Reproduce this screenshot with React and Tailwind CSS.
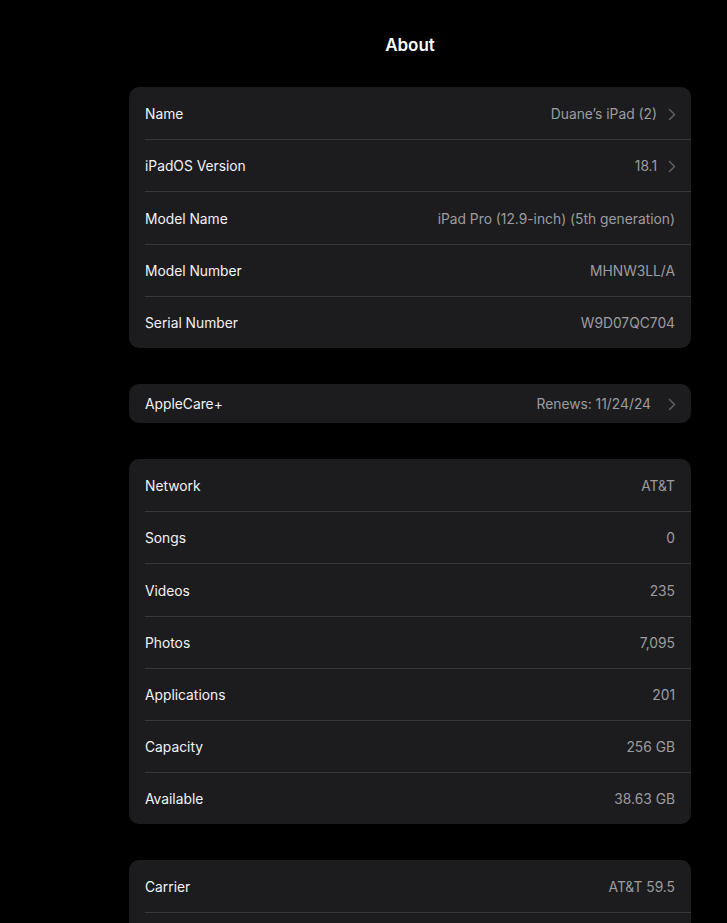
import React from "react";

const deviceRows = [
  { label: "Name", value: "Duane’s iPad (2)", chevron: true },
  { label: "iPadOS Version", value: "18.1", chevron: true },
  { label: "Model Name", value: "iPad Pro (12.9-inch) (5th generation)" },
  { label: "Model Number", value: "MHNW3LL/A" },
  { label: "Serial Number", value: "W9D07QC704" },
];

const careRows = [{ label: "AppleCare+", value: "Renews: 11/24/24", chevron: true, short: true, wideGap: true }];

const statRows = [
  { label: "Network", value: "AT&T" },
  { label: "Songs", value: "0" },
  { label: "Videos", value: "235" },
  { label: "Photos", value: "7,095" },
  { label: "Applications", value: "201" },
  { label: "Capacity", value: "256 GB" },
  { label: "Available", value: "38.63 GB" },
];

const carrierRows = [
  { label: "Carrier", value: "AT&T 59.5" },
  { label: "", value: "" },
];

const Chevron = ({ wide }) => (
  <svg width="8" height="13" viewBox="0 0 8 13" className={wide ? "ml-[17px] mr-[-1px]" : "ml-[11px] mr-[-1px]"}>
    <path d="M1.5 1.5 L6.5 6.5 L1.5 11.5" fill="none" stroke="#5c5c61" strokeWidth="1.6" strokeLinecap="round" strokeLinejoin="round" />
  </svg>
);

const Row = ({ row, first }) => (
  <div className={row.short ? "h-[39px] pl-4" : "h-[52.2px] pl-4"}>
    <div
      className={`h-full flex items-center justify-between pr-4 pt-[2px] ${
        first ? "" : "border-t border-[#38383a]"
      }`}
    >
      <span className="text-[#f2f2f7]">{row.label}</span>
      <span className="flex items-center text-[#9c9ca1]">
        {row.value}
        {row.chevron && <Chevron wide={row.wideGap} />}
      </span>
    </div>
  </div>
);

const Card = ({ rows }) => (
  <div className="bg-[#1c1c1e] rounded-[10px] overflow-hidden">
    {rows.map((row, i) => (
      <Row key={i} row={row} first={i === 0} />
    ))}
  </div>
);

export default function App() {
  return (
    <div
      className="min-h-[923px] h-[923px] overflow-hidden bg-black text-[13.8px]"
      style={{ fontFamily: "Inter, 'Noto Sans', sans-serif" }}
    >
      <div className="ml-[129px] w-[562px]">
        <h1 className="h-[87px] pt-[34px] text-center text-[17px] font-semibold text-white leading-[22px]">
          About
        </h1>
        <div className="flex flex-col gap-[36px]">
          <Card rows={deviceRows} />
          <Card rows={careRows} />
          <Card rows={statRows} />
          <Card rows={carrierRows} />
        </div>
      </div>
    </div>
  );
}
